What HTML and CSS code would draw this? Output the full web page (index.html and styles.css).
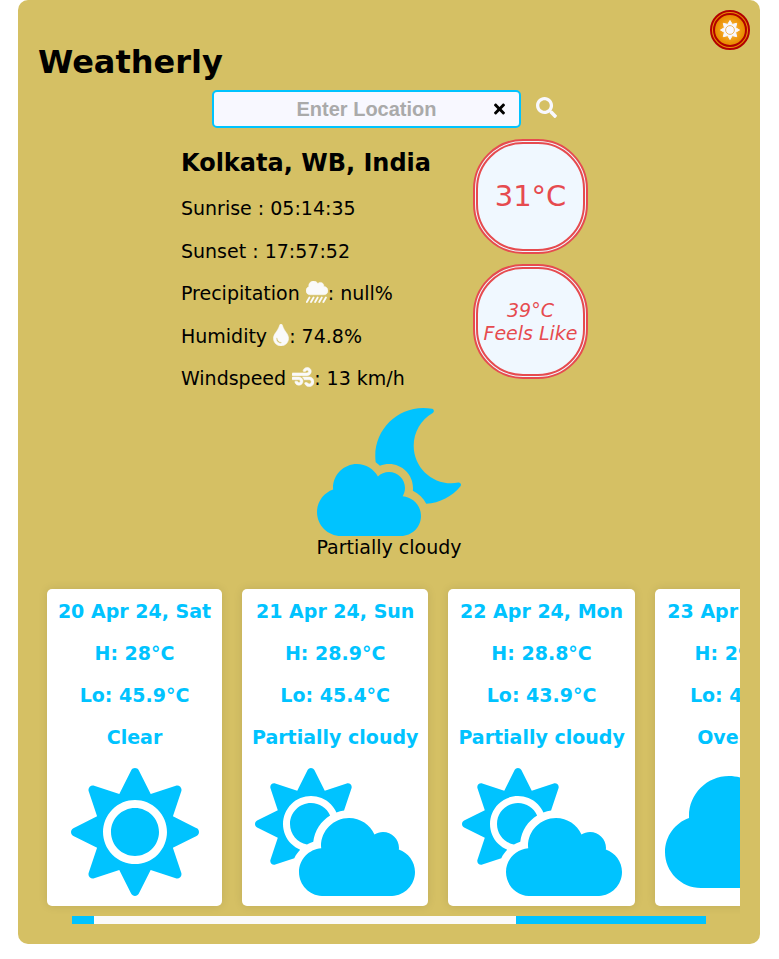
FILE: index.html
```html
<!DOCTYPE html>
<html lang="en">
<head>
<meta charset="utf-8">
<meta name="viewport" content="width=device-width, initial-scale=1">
<title>Weatherly</title>
<link rel="stylesheet" href="styles.css">
</head>
<body>
<svg class="sprite" aria-hidden="true">
  <symbol id="sun" viewBox="0 0 512 512"><path d="M256 160c-52.9 0-96 43.1-96 96s43.1 96 96 96 96-43.1 96-96-43.1-96-96-96zm246.4 80.5l-94.7-47.3 33.5-100.4c4.5-13.6-8.4-26.5-21.9-21.9l-100.4 33.5-47.4-94.8c-6.4-12.8-24.6-12.8-31 0l-47.3 94.7L92.7 70.8c-13.6-4.5-26.5 8.4-21.9 21.9l33.5 100.4-94.7 47.4c-12.8 6.4-12.8 24.6 0 31l94.7 47.3-33.5 100.5c-4.5 13.6 8.4 26.5 21.9 21.9l100.4-33.5 47.3 94.7c6.4 12.8 24.6 12.8 31 0l47.3-94.7 100.4 33.5c13.6 4.5 26.5-8.4 21.9-21.9l-33.5-100.4 94.7-47.3c13-6.5 13-24.7.2-31.1zm-155.9 106c-49.9 49.9-131.1 49.9-181 0-49.9-49.9-49.9-131.1 0-181 49.9-49.9 131.1-49.9 181 0 49.9 49.9 49.9 131.1 0 181z"/></symbol>
  <symbol id="cloud-sun" viewBox="0 0 640 512"><path d="M575.2 325.7c.2-1.9.8-3.7.8-5.6 0-35.3-28.7-64-64-64-12.6 0-24.2 3.8-34.1 10-17.6-38.8-56.5-66-101.9-66-61.8 0-112 50.1-112 112 0 3 .7 5.8.9 8.7-49.6 3.7-88.9 44.7-88.9 95.3 0 53 43 96 96 96h272c53 0 96-43 96-96 0-42.1-27.2-77.4-64.8-90.4zm-430.4-22.6c-43.7-43.7-43.7-114.7 0-158.3 43.7-43.7 114.7-43.7 158.4 0 9.7 9.7 16.9 20.9 22.3 32.7 9.8-3.7 20.1-6 30.7-7.5L386 81.1c4-11.9-7.3-23.1-19.2-19.2L279 91.2 237.5 8.4C232-2.8 216-2.8 210.4 8.4L169 91.2 81.1 61.9C69.3 58 58 69.3 61.9 81.1l29.3 87.8-82.8 41.5c-11.2 5.6-11.2 21.5 0 27.1l82.8 41.4-29.3 87.8c-4 11.9 7.3 23.1 19.2 19.2l76.1-25.3c6.1-12.4 14-23.7 23.6-33.5-13.1-5.4-25.4-13.4-36-24zm-4.8-79.2c0 40.8 29.3 74.8 67.9 82.3 8-4.7 16.3-8.8 25.2-11.7 5.4-44.3 31-82.5 67.4-105C287.3 160.4 258 140 224 140c-46.3 0-84 37.6-84 83.9z"/></symbol>
  <symbol id="cloud" viewBox="0 0 640 512"><path d="M537.6 226.6c4.1-10.7 6.4-22.4 6.4-34.6 0-53-43-96-96-96-19.7 0-38.1 6-53.3 16.2C367 64.2 315.3 32 256 32c-88.4 0-160 71.6-160 160 0 2.7.1 5.4.2 8.1C40.2 219.8 0 273.2 0 336c0 79.5 64.5 144 144 144h368c70.7 0 128-57.3 128-128 0-61.9-44-113.6-102.4-125.4z"/></symbol>
  <symbol id="cloud-moon" viewBox="0 0 576 512"><path d="M342.8 352.7c5.7-9.6 9.2-20.7 9.2-32.7 0-35.3-28.7-64-64-64-17.2 0-32.8 6.9-44.3 17.9-16.3-29.6-47.5-49.9-83.7-49.9-53 0-96 43-96 96 0 2 .5 3.8.6 5.7C27.1 338.8 0 374.1 0 416c0 53 43 96 96 96h240c44.2 0 80-35.8 80-80 0-41.9-32.3-75.8-73.2-79.3zm222.5-54.3c-93.1 17.7-178.5-53.7-178.5-147.7 0-54.2 29-104 76.1-130.8 7.3-4.1 5.4-15.1-2.8-16.7C448.4 1.1 436.7 0 425 0 319.1 0 233.1 85.9 233.1 191.9c0 8.5.7 16.8 1.8 25 5.9 4.3 11.6 8.9 16.7 14.2 11.4-4.7 23.7-7.2 36.4-7.2 52.9 0 96 43.1 96 96 0 3.6-.2 7.2-.6 10.7 23.6 10.8 42.4 29.5 53.5 52.6 54.4-3.4 103.7-29.3 137.1-70.4 5.3-6.5-.5-16.1-8.7-14.5z"/></symbol>
  <symbol id="search" viewBox="0 0 512 512"><path d="M505 442.7L405.3 343c-4.5-4.5-10.6-7-17-7H372c27.6-35.3 44-79.7 44-128C416 93.1 322.9 0 208 0S0 93.1 0 208s93.1 208 208 208c48.3 0 92.7-16.4 128-44v16.3c0 6.4 2.5 12.5 7 17l99.7 99.7c9.4 9.4 24.6 9.4 33.9 0l28.3-28.3c9.4-9.4 9.4-24.6.1-34zM208 336c-70.7 0-128-57.2-128-128 0-70.7 57.2-128 128-128 70.7 0 128 57.2 128 128 0 70.7-57.2 128-128 128z"/></symbol>
  <symbol id="times" viewBox="0 0 352 512"><path d="M242.72 256l100.07-100.07c12.28-12.28 12.28-32.19 0-44.48l-22.24-22.24c-12.28-12.28-32.19-12.28-44.48 0L176 189.28 75.93 89.21c-12.28-12.28-32.19-12.28-44.48 0L9.21 111.45c-12.28 12.28-12.28 32.19 0 44.48L109.28 256 9.21 356.07c-12.28 12.28-12.28 32.19 0 44.48l22.24 22.24c12.28 12.28 32.2 12.28 44.48 0L176 322.72l100.07 100.07c12.28 12.28 32.2 12.28 44.48 0l22.24-22.24c12.28-12.28 12.28-32.19 0-44.48L242.72 256z"/></symbol>
  <symbol id="showers" viewBox="0 0 512 512"><path d="M416 128c-.6 0-1.1.2-1.6.2 1.1-5.2 1.6-10.6 1.6-16.2 0-44.2-35.8-80-80-80-24.6 0-46.3 11.3-61 28.8C256.4 24.8 219.3 0 176 0 114.1 0 64 50.1 64 112c0 7.3.8 14.3 2.1 21.2C27.8 145.8 0 181.5 0 224c0 53 43 96 96 96h320c53 0 96-43 96-96s-43-96-96-96z"/><path fill="none" stroke="currentColor" stroke-width="42" stroke-linecap="round" d="M80 384L20 490M176 384l-60 106M272 384l-60 106M368 384l-60 106M464 384l-60 106"/></symbol>
  <symbol id="tint" viewBox="0 0 352 512"><path d="M205.22 22.09c-7.94-28.78-49.44-30.12-58.44 0C100.01 179.85 0 222.72 0 333.91 0 432.35 78.72 512 176 512s176-79.65 176-178.09c0-111.75-99.79-153.34-146.78-311.82zM176 448c-61.75 0-112-50.25-112-112 0-8.84 7.16-16 16-16s16 7.16 16 16c0 44.11 35.89 80 80 80 8.84 0 16 7.16 16 16s-7.16 16-16 16z"/></symbol>
  <symbol id="wind" viewBox="0 0 512 512"><path d="M156.7 256H16c-8.8 0-16 7.2-16 16v32c0 8.8 7.2 16 16 16h142.2c15.9 0 30.8 10.9 33.4 26.6 3.3 20-12.1 37.4-31.6 37.4-14.1 0-26.1-9.2-30.4-21.9-2.1-6.3-8.6-10.1-15.2-10.1H81.6c-9.8 0-17.7 8.8-15.9 18.4 8.6 44.1 47.6 77.6 94.2 77.6 57.1 0 102.7-50.1 95.2-108.6C249 291 205.4 256 156.7 256zM16 224h336c59.7 0 106.8-54.8 93.8-116.7-7.6-36.2-36.9-65.5-73.1-73.1-55.4-11.6-105.1 24.9-114.9 75.5-1.9 9.6 6.1 18.3 15.8 18.3h32.8c6.7 0 13.1-3.8 15.2-10.1C325.9 105.2 337.9 96 352 96c19.4 0 34.9 17.4 31.6 37.4-2.6 15.7-17.4 26.6-33.4 26.6H16c-8.8 0-16 7.2-16 16v32c0 8.8 7.2 16 16 16zm384 32H243.7c19.3 16.6 33.2 38.8 39.8 64H400c26.5 0 48 21.5 48 48s-21.5 48-48 48c-17.9 0-33.3-9.9-41.6-24.4-2.9-5-8.7-7.6-14.5-7.6h-33.8c-10.9 0-19 10.8-15.3 21.1 17.8 50.6 70.5 84.8 129.4 72.3 41.2-8.7 75.1-41.6 84.7-82.7C526 321.5 470.5 256 400 256z"/></symbol>
</svg>
<main class="app">
  <button class="theme" type="button" aria-label="Toggle theme"><svg viewBox="0 0 20 20"><path stroke="currentColor" stroke-linejoin="round" d="M10 .5L12.3 4.4L16.7 3.3L15.6 7.7L19.5 10L15.6 12.3L16.7 16.7L12.3 15.6L10 19.5L7.7 15.6L3.3 16.7L4.4 12.3L.5 10L4.4 7.7L3.3 3.3L7.7 4.4Z"/><circle class="ring" cx="10" cy="10" r="4.4"/></svg></button>
  <h1>Weatherly</h1>
  <form class="search">
    <div class="field">
      <input type="text" placeholder="Enter Location" aria-label="Enter Location">
      <button class="clear" type="button" aria-label="Clear"><svg><use href="#times"/></svg></button>
    </div>
    <button class="go" type="button" aria-label="Search"><svg><use href="#search"/></svg></button>
  </form>
  <section class="current">
    <div class="details">
      <h2>Kolkata, WB, India</h2>
      <p>Sunrise : 05:14:35</p>
      <p>Sunset : 17:57:52</p>
      <p>Precipitation <svg class="glyph"><use href="#showers"/></svg>: null%</p>
      <p>Humidity <svg class="glyph drop"><use href="#tint"/></svg>: 74.8%</p>
      <p>Windspeed <svg class="glyph"><use href="#wind"/></svg>: 13 km/h</p>
    </div>
    <div class="temps">
      <div class="temp">31°C</div>
      <div class="temp feels">39°C<br>Feels Like</div>
    </div>
  </section>
  <figure class="condition">
    <svg><use href="#cloud-moon"/></svg>
    <figcaption>Partially cloudy</figcaption>
  </figure>
  <section class="forecast">
    <article class="day">
      <p>20 Apr 24, Sat</p><p>H: 28°C</p><p>Lo: 45.9°C</p><p>Clear</p>
      <svg class="square"><use href="#sun"/></svg>
    </article>
    <article class="day">
      <p>21 Apr 24, Sun</p><p>H: 28.9°C</p><p>Lo: 45.4°C</p><p>Partially cloudy</p>
      <svg><use href="#cloud-sun"/></svg>
    </article>
    <article class="day">
      <p>22 Apr 24, Mon</p><p>H: 28.8°C</p><p>Lo: 43.9°C</p><p>Partially cloudy</p>
      <svg><use href="#cloud-sun"/></svg>
    </article>
    <article class="day">
      <p>23 Apr 24, Tue</p><p>H: 29.1°C</p><p>Lo: 42.8°C</p><p>Overcast</p>
      <svg><use href="#cloud"/></svg>
    </article>
  </section>
  <div class="track"><span class="start"></span><span class="end"></span></div>
</main>
</body>
</html>
```
FILE: styles.css
```css
* { box-sizing: border-box; }

body {
  margin: 0;
  padding: 0 19px 15px 18px;
  background: #fff;
  color: #000;
  font: 19px/23px Verdana, "DejaVu Sans", sans-serif;
}

h1, h2, p, figure { margin: 0; }
svg { fill: currentColor; }
.sprite { display: none; }
button { padding: 0; border: 0; background: none; cursor: pointer; }
button svg { display: block; }

.app {
  position: relative;
  padding: 42px 20px 20px;
  border-radius: 10px;
  background: #d5c064;
}

h1 { font-size: 32px; line-height: 40px; }

.theme {
  position: absolute;
  top: 10px;
  right: 10px;
  display: grid;
  place-items: center;
  width: 40px;
  height: 40px;
  border: 5px double #b30000;
  border-radius: 50%;
  background: radial-gradient(circle, #ffc040, #e88a00 70%);
  color: #f8f8ff;
}
.theme svg { width: 20px; height: 20px; }
.ring { fill: none; stroke: #f0b860; stroke-width: 1; }

.search {
  display: flex;
  justify-content: center;
  align-items: center;
  gap: 15px;
  margin-top: 8px;
  padding-right: 9px;
}
.field { position: relative; width: 309px; }
.field input {
  display: block;
  width: 100%;
  height: 38px;
  padding: 0 10px;
  border: 2px solid #00c3ff;
  border-radius: 5px;
  background: #f8f8ff;
  font: bold 20px/24px "Liberation Sans", Arial, sans-serif;
  text-align: center;
}
.field input::placeholder { color: #aaa; opacity: 1; }
.clear { position: absolute; top: 10px; right: 16px; color: #000; }
.clear svg { width: 11px; height: 18px; }
.go { padding-bottom: 4px; color: #f8f8ff; }
.go svg { width: 21px; height: 21px; }

.current {
  display: flex;
  justify-content: center;
  gap: 42px;
  margin-top: 11px;
  padding-right: 9px;
}
.details {
  display: flex;
  flex-direction: column;
  justify-content: space-between;
  padding-top: 9px;
}
h2 { font-size: 24px; line-height: 30px; }
.glyph {
  width: 22px;
  height: 22px;
  margin: -4px 0;
  vertical-align: 1px;
  color: #fafafa;
  stroke: currentColor;
  stroke-width: 12px;
  overflow: visible;
}
.glyph.drop { width: 16px; }

.temps {
  display: flex;
  flex-direction: column;
  gap: 10px;
  padding-bottom: 11px;
}
.temp {
  display: grid;
  place-items: center;
  width: 115px;
  height: 115px;
  border: 5px double #e64b4f;
  border-radius: 50px;
  background: #f0f8ff;
  color: #e64b4f;
  font-size: 29px;
  text-align: center;
}
.temp.feels { align-content: center; font-size: 19px; font-style: italic; }

.condition { margin-top: 18px; text-align: center; }
.condition svg { display: block; width: 144px; height: 128px; margin: 0 auto; color: #00c3ff; }

.forecast {
  display: flex;
  gap: 20px;
  margin-top: 20px;
  padding: 10px 9px;
  overflow-x: auto;
  scrollbar-width: none;
}
.day {
  flex: none;
  min-width: 175px;
  padding: 11px 10px 10px;
  border-radius: 5px;
  background: #fff;
  box-shadow: 0 0 10px rgba(0, 0, 0, 0.1);
  color: #00c3ff;
  font-weight: bold;
  text-align: center;
  white-space: nowrap;
}
.day p { margin-bottom: 19px; }
.day svg { display: block; width: 160px; height: 128px; margin: 0 auto; }
.day svg.square { width: 128px; }

.track {
  display: flex;
  justify-content: space-between;
  height: 8px;
  margin: 0 34px;
  background: #fafafa;
}
.track span { background: #00c3ff; }
.start { width: 22px; }
.end { width: 30%; }
```
